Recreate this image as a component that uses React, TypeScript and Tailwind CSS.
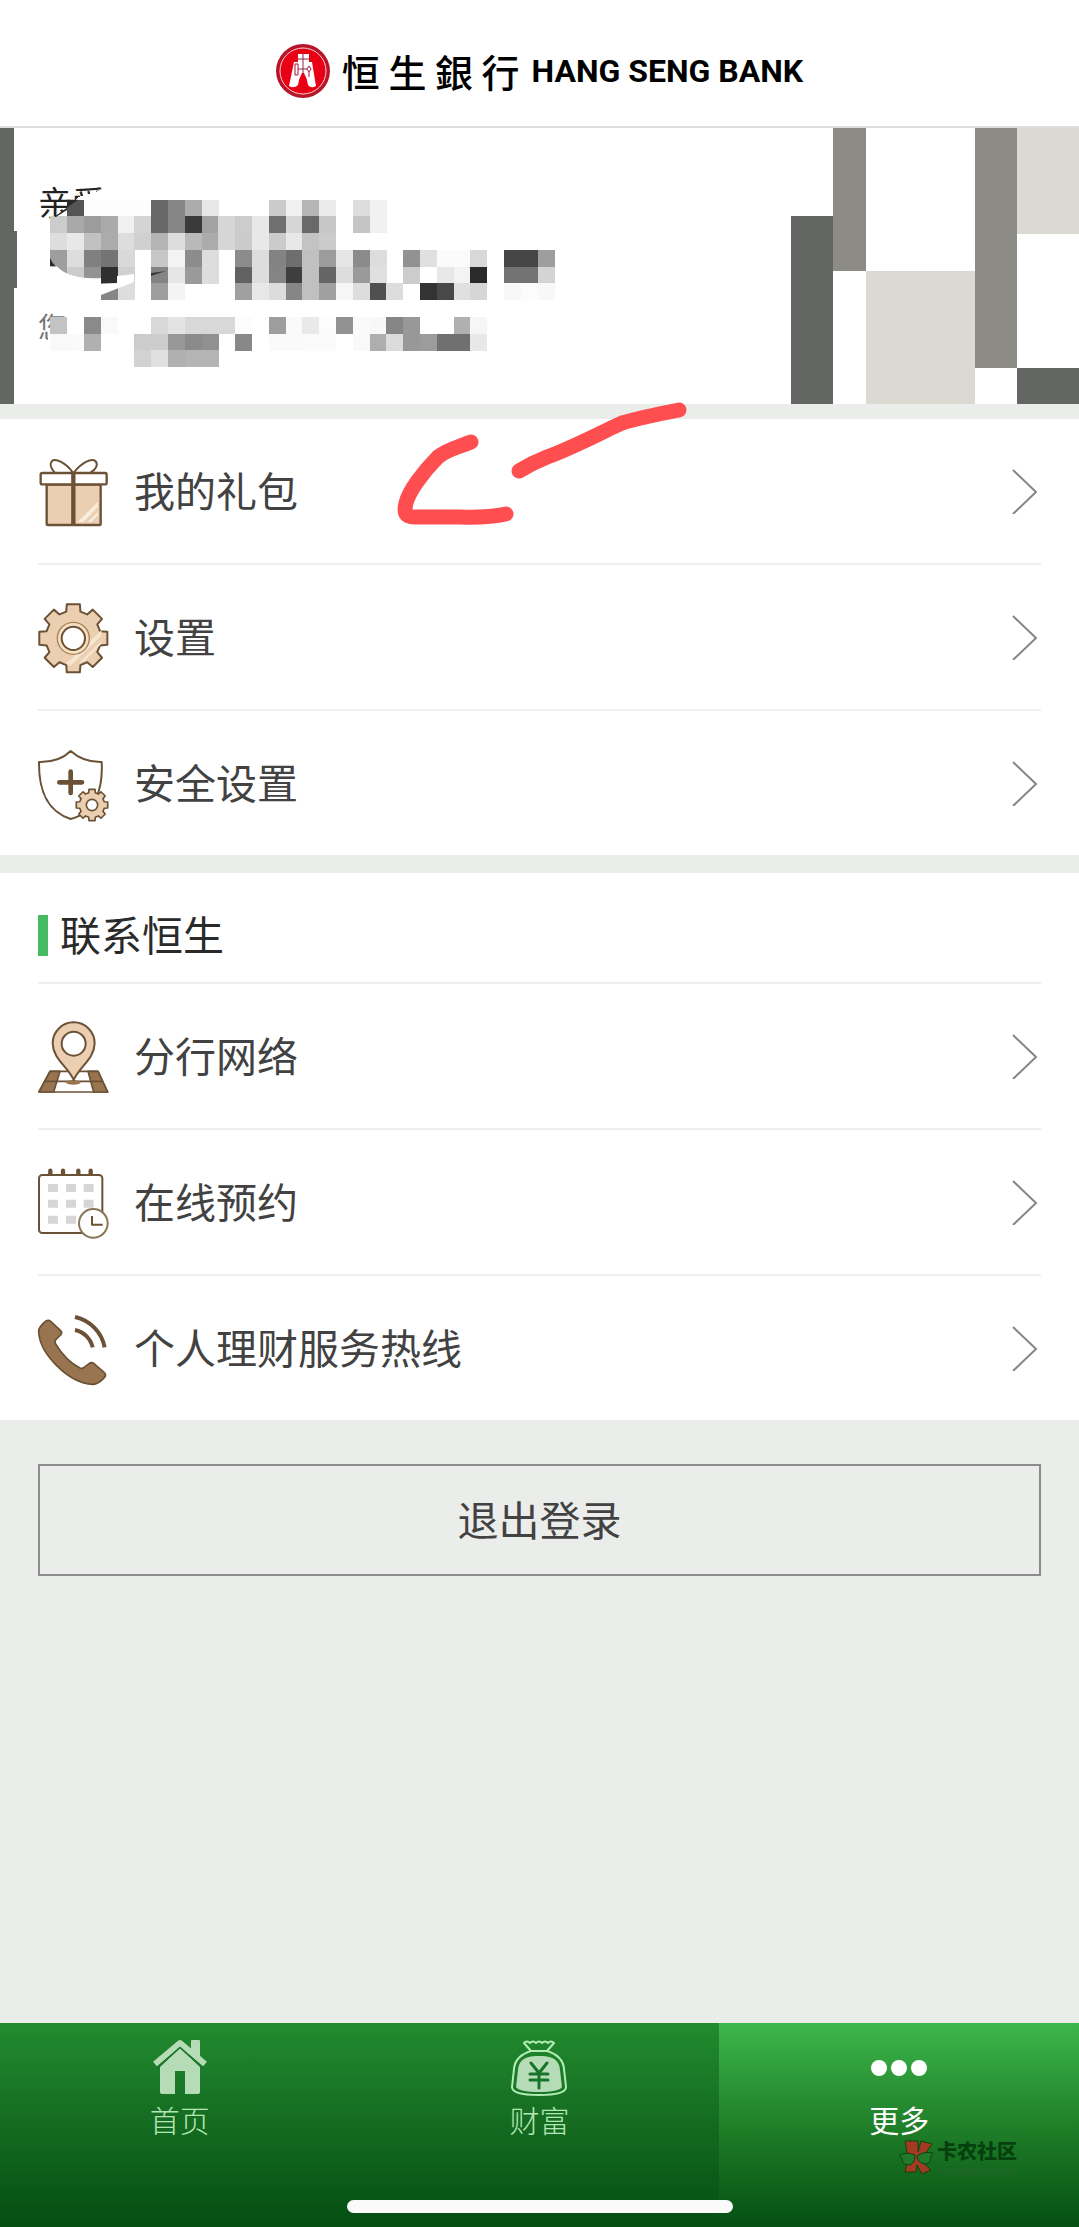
import type { ReactNode } from "react";

const LINE = "#6b5136";
const SAND = "#ebcfb0";

function gearPath(cx: number, cy: number, outer: number, inner: number) {
  const points: string[] = [];
  for (let i = 0; i < 8; i++) {
    const mid = (i * Math.PI) / 4 - Math.PI / 2;
    const corners = [
      [inner, -0.26],
      [outer, -0.19],
      [outer, 0.19],
      [inner, 0.26],
    ];
    for (const [r, a] of corners) {
      points.push(
        `${(cx + r * Math.cos(mid + a)).toFixed(1)} ${(cy + r * Math.sin(mid + a)).toFixed(1)}`
      );
    }
  }
  return `M${points.join("L")}Z`;
}

function IconBox({ children }: { children: ReactNode }) {
  return (
    <svg
      viewBox="0 0 216 216"
      className="size-18 shrink-0 overflow-visible"
      fill="none"
      stroke={LINE}
      strokeWidth={6}
      strokeLinejoin="round"
      aria-hidden="true"
    >
      {children}
    </svg>
  );
}

function GiftIcon() {
  return (
    <IconBox>
      <path d="M104 52C84 24 52 8 42 18C34 28 40 42 50 52" />
      <path d="M108 52C130 24 160 8 172 18C182 28 174 44 158 52" />
      <rect x="26" y="89" width="162" height="121" rx="4" fill={SAND} strokeWidth={7} />
      <path d="M118 202L180 140V156L136 202ZM148 202L180 170V180L160 202Z" fill="#f8ecdd" stroke="none" />
      <rect x="8" y="54" width="198" height="34" rx="5" fill="#fff" strokeWidth={7} />
      <path d="M106 52V210" strokeWidth={13} />
    </IconBox>
  );
}

function GearIcon() {
  return (
    <IconBox>
      <path d={gearPath(106, 112, 104, 83)} fill={SAND} />
      <path d="M84 188L190 88V104L98 194ZM122 186L190 120V128L140 180Z" fill="#f6e6d0" stroke="none" />
      <circle cx="106" cy="112" r="48" fill="#f6e0bf" stroke="#a5835a" strokeWidth={4} />
      <circle cx="106" cy="112" r="35" fill="#fff" />
    </IconBox>
  );
}

function ShieldIcon() {
  return (
    <IconBox>
      <path
        d="M98 12C118 30 150 46 191 45C195 120 176 196 98 216C20 190 2 120 3 45C45 46 78 32 98 12Z"
        fill="#fff"
      />
      <path d="M98 74V138M64 106H132" strokeWidth={14} strokeLinecap="round" />
      <path d={gearPath(162, 174, 48, 38)} fill={SAND} strokeWidth={5} />
      <circle cx="162" cy="174" r="17" fill="#fff" strokeWidth={5} />
    </IconBox>
  );
}

function BranchIcon() {
  return (
    <IconBox>
      <path d="M36 154H180L209 216H3Z" fill="#fff" strokeWidth={5} />
      <path d="M36 154H66L47 216H3ZM150 154H180L209 216H167Z" fill="#987450" strokeWidth={5} />
      <path d="M20 184H194" strokeWidth={5} />
      <ellipse cx="106" cy="187" rx="22" ry="7" fill="#987450" stroke="none" />
      <path d="M107 180C92 142 44 116 44 70A63 63 0 0 1 170 70C170 116 122 142 107 180Z" fill={SAND} />
      <circle cx="107" cy="71" r="36" fill="#fff" />
    </IconBox>
  );
}

function CalendarIcon() {
  return (
    <IconBox>
      <path d="M37 14V26M75 14V26M121 14V26M158 14V26" strokeWidth={13} strokeLinecap="round" />
      <rect x="3" y="27" width="190" height="174" rx="10" fill="#fff" />
      {[54, 101, 149].map((y) => (
        <path key={y} d={`M30 ${y + 12}H60M84 ${y + 12}H114M137 ${y + 12}H167`} stroke="#d8d5d8" strokeWidth={24} />
      ))}
      <circle cx="166" cy="172" r="43" fill="#fff" stroke="#8b7557" />
      <path d="M162 150V176H194" />
    </IconBox>
  );
}

function PhoneIcon() {
  return (
    <IconBox>
      <path
        d="M38 28L68 56Q74 62 68 69L54 82Q48 88 53 96C74 131 98 154 126 168Q133 171 138 166L153 155Q161 149 168 155L199 182Q206 189 199 197C189 208 178 218 164 217C90 214 4 124 2 58C2 46 14 35 24 27Q31 22 38 28Z"
        fill="#987450"
        strokeWidth={5}
      />
      <path d="M111 54C138 60 158 80 164 106M111 15C158 26 191 60 200 106" strokeWidth={12} />
    </IconBox>
  );
}

function Logo() {
  return (
    <svg viewBox="0 0 54 54" className="size-[54px]" aria-hidden="true">
      <circle cx="27" cy="27" r="27" fill="#b8152b" />
      <circle cx="27" cy="27" r="23" fill="#ea0014" stroke="#fbd0d0" />
      <path
        d="M22 10H33V18H36L40 42Q35 45 32 41Q31 34 28 29H26Q23 34 22 41Q18 45 13 42L18 18H22Z"
        fill="#fff"
      />
      <path d="M27 10V29M22 15H33M22 25H31" stroke="#8d2940" strokeWidth="1" />
      <path d="M19 20H22V31H19ZM33 22L35 25L33 28L31 25ZM33 28V33" fill="none" stroke="#a81230" strokeWidth="1" />
    </svg>
  );
}

// grey levels of the blurred-out greeting, one pair of hex digits per cell
const MOSAIC = [
  "-- 55 fc fc fd fd 68 86 ab e8 -- -- -- cb f1 b6 eb -- dd f1",
  "cc a8 9c aa f1 d4 68 86 3a a2 d6 cc e8 70 d6 69 c7 -- c5 f1",
  "dd e8 c1 ab dd d0 b4 dd b9 ab d6 cb e8 cb e8 c3 cb",
  "9e dd 80 74 d9 -- c7 f3 8c dd -- 8c dd 83 6e c0 9c e6 8b dd -- 92 e0 fb fb d8 -- 45 45 9e",
  "9e cc 93 2f d0 -- 84 e6 9a dd -- 62 dd 84 3e c0 65 dd 9a e0 -- cc ff e8 f3 2a -- 73 73 d4",
  "-- -- -- 86 dd -- 9e f4 -- -- -- a0 e8 dc 86 c0 a0 f6 dd 50 dd -- 33 48 e0 d6 -- f8 fc f8",
  "",
  "c3 -- 8a f9 -- -- d8 e3 d8 d8 d8 fc -- 9e fa e9 fc 92 fa f8 86 98 -- -- b0 f6",
  "f9 fa b0 -- -- cc cc 98 8a 90 -- 88 -- fa fa fb fb -- f9 ae dc 98 9c 70 70 e8",
  "-- -- -- -- -- d2 e0 b0 b4 b4",
];

function Mosaic() {
  return (
    <svg
      viewBox="38 186 518 184"
      className="absolute left-0 top-0 h-[184px] w-[518px]"
      shapeRendering="crispEdges"
      aria-hidden="true"
    >
      <path d="M56 217L70 206L78 197L106 189V222H54Z" fill="#fff" />
      <path d="M50 334L62 318H74V344H46Z" fill="#fff" />
      {MOSAIC.map((row, y) =>
        row.split(" ").map((level, x) =>
          level && level !== "--" ? (
            <rect
              key={`${x}-${y}`}
              x={50.3 + x * 16.8}
              y={199.7 + y * 16.75}
              width={17}
              height={17}
              fill={`#${level}${level}${level}`}
            />
          ) : null
        )
      )}
      <g shapeRendering="auto">
        <path d="M54 217L78 199.7H67V210L56 217Z" fill="#2a2a2a" />
        <path d="M50 258Q52 263 56 266.500H50Z" fill="#2a2a2a" />
        <path d="M50 266.500H57Q70 280 101 278V284H50Z" fill="#fff" />
        <path d="M117 276L134 274V282L101 295V284L117 283Z" fill="#fff" />
        <path d="M151 273L166 271L151 276Z" fill="#3a3a3a" />
      </g>
    </svg>
  );
}

function BannerArt() {
  return (
    <svg viewBox="791 128 288 276" className="h-[276px] w-72 shrink-0" aria-hidden="true">
      <path d="M791 216H833V404H791ZM1017 368H1079V404H1017Z" fill="#646664" />
      <path d="M833 128H866V271H833ZM975 128H1017V368H975Z" fill="#8c8b86" />
      <path d="M866 271H975V404H866ZM1017 128H1079V234H1017Z" fill="#dbdad2" />
    </svg>
  );
}

function MenuItem({ icon, label }: { icon: ReactNode; label: string }) {
  return (
    <li className="border-b-2 border-[#efefef] last:border-b-0">
      <a href="#" className="flex items-center gap-6 py-9">
        {icon}
        <span className="flex-1 pb-1">{label}</span>
        <svg viewBox="0 0 30 46" className="h-[46px] w-[30px]" fill="none" stroke="#858585" strokeWidth="2" aria-hidden="true">
          <path d="M2 2L25 24L2 46" />
        </svg>
      </a>
    </li>
  );
}

function HomeIcon() {
  return (
    <svg viewBox="0 0 56 56" className="size-14" aria-hidden="true">
      <path d="M39 2Q39 1 40 1H47Q48 1 48 2V22L39 14Z" fill="#b5dcb6" />
      <path d="M3 25L28 4L53 25" fill="none" stroke="#b5dcb6" strokeWidth="6" strokeLinejoin="round" />
      <path d="M28 9L48 28V53Q48 55 46 55H33V32H23V55H10Q8 55 8 53V28Z" fill="#b5dcb6" />
      <path d="M5 29L28 8.500L51 29" fill="none" stroke="#1b6f27" strokeWidth="1.500" />
    </svg>
  );
}

function WealthIcon() {
  return (
    <svg viewBox="0 0 56 58" className="h-[58px] w-14" aria-hidden="true">
      <path
        d="M20 12L13 4Q16 1 19 4Q22 1 25 4Q28 1 31 4Q34 1 37 4Q40 1 43 4L36 12Q52 17 53 30L55 48Q55 56 28 56Q1 56 1 48L3 30Q4 17 20 12ZM20 12H36"
        fill="none"
        stroke="#b4ecb6"
        strokeWidth="2"
        strokeLinejoin="round"
      />
      <path d="M28 17Q48 16 49 31L51 48Q48 53 28 53Q8 53 5 48L7 31Q8 16 28 17Z" fill="#b5dcb6" />
      <path
        d="M20 24L28 34L36 24M28 34V49M19 35H37M19 41H37"
        fill="none"
        stroke="#17722a"
        strokeWidth="3"
        strokeLinecap="round"
        strokeLinejoin="round"
      />
    </svg>
  );
}

function MoreIcon() {
  return (
    <svg viewBox="0 0 56 56" className="size-14" fill="#fff" aria-hidden="true">
      <circle cx="8" cy="29" r="8" />
      <circle cx="28" cy="29" r="8" />
      <circle cx="48" cy="29" r="8" />
    </svg>
  );
}

function Watermark() {
  return (
    <div className="pointer-events-none absolute right-[62px] top-[116px] flex items-start gap-1 text-[#06400f]">
      <svg viewBox="0 0 34 36" className="h-9 w-[34px]" stroke="#14400f" strokeWidth="1" aria-hidden="true">
        <path d="M6 2H19V13L22 2L33 5L26 15L20 20L32 31L23 35L18 26L17 33H6L8 24V14Z" fill="#a23b22" />
        <path d="M0 17Q6 12 16 16Q16 26 9 26Q3 26 3 19ZM18 17Q24 12 34 14L32 17Q32 25 26 25Q19 24 18 17Z" fill="#1f7a2b" />
      </svg>
      <div>
        <p className="text-[20px] leading-6 font-black">卡农社区</p>
        <svg viewBox="0 0 78 8" className="mt-1 h-2 w-[78px]" aria-hidden="true">
          <path d="M2 4H78" stroke="#28622f" strokeWidth="7" strokeDasharray="8 2" opacity="0.4" />
        </svg>
      </div>
    </div>
  );
}

export default function App() {
  return (
    <div className="relative flex min-h-screen flex-col overflow-hidden bg-[#ebedeb] font-['Noto_Sans_CJK_SC',sans-serif] text-[41px] leading-[60px] text-[#424242]">
      <header className="flex items-center justify-center gap-3 border-b-2 border-[#dedede] bg-white pt-11 pb-7 text-black">
        <Logo />
        <h1 className="flex items-center gap-3 leading-[54px] font-bold">
          <span className="text-[38px] font-medium">恒 生 銀 行</span>
          <span className="font-[Roboto,sans-serif] text-[32px]">HANG SENG BANK</span>
        </h1>
      </header>

      <main className="flex-1">
        <section className="flex justify-between bg-white">
          <svg viewBox="0 0 18 276" className="h-[276px] w-[18px] shrink-0" fill="#646664" aria-hidden="true">
            <path d="M0 0H14V103H17V160H14V276H0Z" />
          </svg>
          <div className="relative ml-5 mt-[58px] flex-1">
            <p className="text-[34px] leading-8 text-[#222]">亲爱</p>
            <p className="mt-[92px] text-[28px] leading-8 text-[#777]">您</p>
            <Mosaic />
          </div>
          <BannerArt />
        </section>

        <section className="relative mt-[15px] bg-white px-[38px]">
          <ul>
            <MenuItem icon={<GiftIcon />} label="我的礼包" />
            <MenuItem icon={<GearIcon />} label="设置" />
            <MenuItem icon={<ShieldIcon />} label="安全设置" />
          </ul>
          <svg
            viewBox="0 0 320 150"
            className="pointer-events-none absolute -top-[29px] left-[380px] h-[150px] w-80"
            fill="none"
            stroke="#ff4e50"
            strokeWidth="15"
            strokeLinecap="round"
            strokeLinejoin="round"
            aria-hidden="true"
          >
            <path d="M91 52C76 58 66 60 58 67C43 82 29 101 26 113C23 125 27 127 36 127H80Q108 128 126 124" />
            <path d="M139 81Q152 73 167 67C194 57 222 42 242 33Q258 28 299 20" />
          </svg>
        </section>

        <section className="mt-[18px] bg-white px-[38px]">
          <div className="flex items-center gap-3 border-b-2 border-[#efefef] pt-[30px] pb-[15px] text-[#2a2a2a]">
            <span className="h-[41px] w-[10px] bg-[#45ba62]" />
            <h2 className="pb-1">联系恒生</h2>
          </div>
          <ul>
            <MenuItem icon={<BranchIcon />} label="分行网络" />
            <MenuItem icon={<CalendarIcon />} label="在线预约" />
            <MenuItem icon={<PhoneIcon />} label="个人理财服务热线" />
          </ul>
        </section>

        <div className="px-[38px] py-11">
          <button type="button" className="w-full border-2 border-[#8c8c8c] pt-[22px] pb-[26px]">
            退出登录
          </button>
        </div>
      </main>

      <nav className="relative grid grid-cols-3 text-[30px] leading-9 font-light text-[#b4e6b5]">
        <a
          href="#"
          className="flex flex-col items-center bg-linear-to-b from-[#228b30] via-[#146b20] to-[#054e12] pt-4 pb-[90px]"
        >
          <HomeIcon />
          <span className="mt-[6px]">首页</span>
        </a>
        <a
          href="#"
          className="flex flex-col items-center bg-linear-to-b from-[#228b30] via-[#146b20] to-[#054e12] pt-4"
        >
          <WealthIcon />
          <span className="mt-1">财富</span>
        </a>
        <a
          href="#"
          aria-current="page"
          className="flex flex-col items-center bg-linear-to-b from-[#3cb74b] via-[#208029] to-[#055013] pt-4 font-normal text-white"
        >
          <MoreIcon />
          <span className="mt-[6px]">更多</span>
        </a>
        <Watermark />
        <div className="absolute inset-x-0 bottom-[14px] mx-auto h-[13px] w-[386px] rounded-full bg-[#fafafa]" />
      </nav>
    </div>
  );
}
